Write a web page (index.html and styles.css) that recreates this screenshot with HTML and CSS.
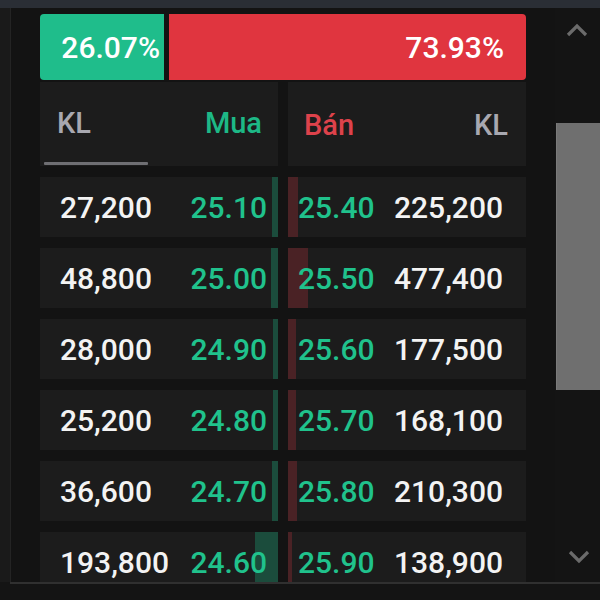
FILE: index.html
```html
<!DOCTYPE html>
<html lang="vi">
<head>
<meta charset="utf-8">
<link rel="stylesheet" href="styles.css">
</head>
<body>
<div class="topbar"></div>
<div class="main">
  <div class="sidestrip"></div>
  <div class="panel">
    <div class="ratio">
      <div class="ratio-buy">26.07%</div>
      <div class="ratio-sell">73.93%</div>
    </div>
    <div class="book">
      <div class="head head-buy">
        <div class="head-row"><span class="kl">KL</span><span class="buy">Mua</span></div>
        <div class="tab-line"></div>
      </div>
      <div class="head head-sell">
        <div class="head-row"><span class="sell">Bán</span><span class="kl">KL</span></div>
      </div>

      <div class="cell cell-buy" style="--w:6px"><span class="vol">27,200</span><span class="price">25.10</span></div>
      <div class="cell cell-sell" style="--w:10px"><span class="price">25.40</span><span class="vol">225,200</span></div>

      <div class="cell cell-buy" style="--w:7px"><span class="vol">48,800</span><span class="price">25.00</span></div>
      <div class="cell cell-sell" style="--w:20px"><span class="price">25.50</span><span class="vol">477,400</span></div>

      <div class="cell cell-buy" style="--w:5px"><span class="vol">28,000</span><span class="price">24.90</span></div>
      <div class="cell cell-sell" style="--w:8px"><span class="price">25.60</span><span class="vol">177,500</span></div>

      <div class="cell cell-buy" style="--w:5px"><span class="vol">25,200</span><span class="price">24.80</span></div>
      <div class="cell cell-sell" style="--w:8px"><span class="price">25.70</span><span class="vol">168,100</span></div>

      <div class="cell cell-buy" style="--w:6px"><span class="vol">36,600</span><span class="price">24.70</span></div>
      <div class="cell cell-sell" style="--w:9px"><span class="price">25.80</span><span class="vol">210,300</span></div>

      <div class="cell cell-buy" style="--w:23px"><span class="vol">193,800</span><span class="price">24.60</span></div>
      <div class="cell cell-sell" style="--w:4px"><span class="price">25.90</span><span class="vol">138,900</span></div>
    </div>
  </div>
  <div class="scrollbar">
    <svg class="chev chev-up" width="24" height="14" viewBox="0 0 24 14"><path d="M3 12 L12 3 L21 12" fill="none" stroke="#6b6b6b" stroke-width="3.2"/></svg>
    <div class="thumb"></div>
    <svg class="chev chev-down" width="24" height="14" viewBox="0 0 24 14"><path d="M3 2 L12 11 L21 2" fill="none" stroke="#6b6b6b" stroke-width="3.2"/></svg>
  </div>
</div>
<div class="bottomline"></div>
<div class="footer"></div>
</body>
</html>
```
FILE: styles.css
```css
* { box-sizing: border-box; }
html, body { margin: 0; padding: 0; }
body {
  width: 600px;
  height: 600px;
  overflow: hidden;
  background: #141414;
  font-family: Roboto, "Liberation Sans", sans-serif;
  font-weight: 500;
  display: flex;
  flex-direction: column;
}
.topbar {
  height: 8px;
  background: #2a2e35;
  flex: none;
}
.main {
  height: 574px;
  display: flex;
  flex: none;
}
.sidestrip {
  width: 11px;
  background: #1a1a1a;
  border-right: 1px solid #242424;
  flex: none;
}
.panel {
  width: 544px;
  padding: 6px 0 0 29px;
  overflow: hidden;
  background: #131313;
  flex: none;
}
.ratio {
  width: 486px;
  height: 66px;
  display: flex;
  gap: 5px;
  font-size: 30px;
  color: #ffffff;
}
.ratio-buy {
  width: 124px;
  background: #1fbd8b;
  border-radius: 4px 0 0 4px;
  display: flex;
  align-items: center;
  justify-content: flex-end;
  padding-right: 4px;
}
.ratio-sell {
  flex: 1;
  background: #e0353f;
  border-radius: 0 4px 4px 0;
  display: flex;
  align-items: center;
  justify-content: flex-end;
  padding-right: 22px;
}
.book {
  width: 486px;
  margin-top: 2px;
  display: grid;
  grid-template-columns: 238px 238px;
  grid-auto-rows: 60px;
  grid-template-rows: 84px;
  column-gap: 10px;
  row-gap: 11px;
  font-size: 30px;
}
.head {
  background: #1c1c1c;
  display: flex;
  flex-direction: column;
  justify-content: flex-end;
}
.head-row {
  display: flex;
  justify-content: space-between;
  align-items: center;
  flex: 1;
  font-size: 29px;
}
.head-buy .head-row { padding: 2px 16px 0 17px; }
.head-sell .head-row { padding: 2px 18px 0 16px; }
.head-buy { padding-bottom: 1px; }
.tab-line {
  width: 104px;
  height: 3px;
  margin-left: 4px;
  background: #6f6f73;
  border-radius: 1px;
}
.kl { color: #a8a8b0; }
.buy { color: #1db886; }
.sell { color: #dd424b; }
.cell {
  display: flex;
  justify-content: space-between;
  align-items: center;
  color: #f3f3f3;
}
.cell-buy {
  padding: 0 11px 0 20px;
  background: linear-gradient(to left, #1b4c3c var(--w), #1c1c1c var(--w));
}
.cell-sell {
  padding: 0 23px 0 10px;
  background: linear-gradient(to right, #4a2225 var(--w), #1c1c1c var(--w));
}
.price { color: #20c28c; }
.scrollbar {
  width: 45px;
  flex: none;
  background: #141414;
  display: flex;
  flex-direction: column;
  align-items: flex-end;
  padding-top: 15px;
}
.chev { display: block; flex: none; }
.chev-up { margin-right: 11px; }
.thumb {
  width: 44px;
  height: 267px;
  margin-top: 86px;
  background: #6f6f6f;
  border-left: 1px solid #7a7a7a;
}
.chev-down { margin-top: 160px; margin-right: 9px; }
.bottomline {
  height: 2px;
  background: #303030;
  margin-left: 10px;
  flex: none;
}
.footer {
  flex: 1;
  background: #141414;
}
```
